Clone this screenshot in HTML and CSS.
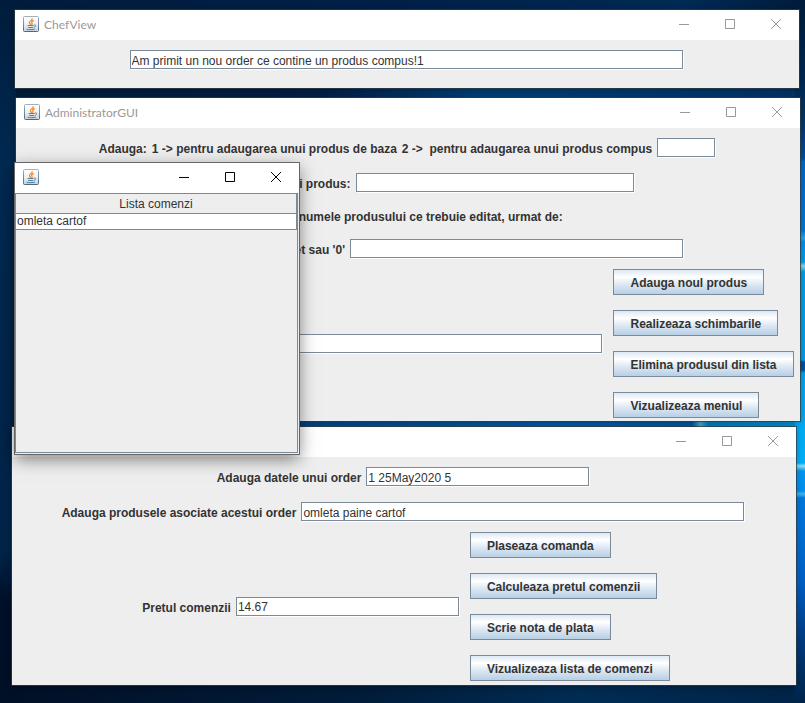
FILE: index.html
```html
<!DOCTYPE html>
<html lang="ro">
<head>
<meta charset="utf-8">
<meta name="viewport" content="width=device-width, initial-scale=1">
<title>Restaurant</title>
<link rel="stylesheet" href="styles.css">
</head>
<body>
<svg class="defs" aria-hidden="true">
  <defs>
    <linearGradient id="tile" x1="0" y1="0" x2="0" y2="1">
      <stop offset="0" stop-color="#ffffff"/>
      <stop offset="0.5" stop-color="#eef1f4"/>
      <stop offset="1" stop-color="#c4d0da"/>
    </linearGradient>
    <linearGradient id="edge" x1="0" y1="0" x2="0" y2="1">
      <stop offset="0" stop-color="#9fb0be"/>
      <stop offset="1" stop-color="#4b6a84"/>
    </linearGradient>
    <symbol id="java" viewBox="0 0 16 16">
      <rect x="0.5" y="0.5" width="15" height="15" rx="1" fill="url(#tile)" stroke="url(#edge)"/>
      <path d="M9.2 2.3C9.8 4.4 6 4.8 6.4 6.8C6.6 7.6 7.4 7.8 7.6 8.8M10.8 4.6C8.8 5.2 8 6 9 7.2C9.4 7.8 9 8.4 8.6 8.8" fill="none" stroke="#ee8322" stroke-width="1.2"/>
      <path d="M4.6 9.5H10.6M5.2 11.5H10.2M11.2 8.9C13.4 8.6 13 10.8 11 11.1M3.6 13.3C6 13.8 9.6 13.8 12 13" fill="none" stroke="#5a7f9a" stroke-width="1"/>
    </symbol>
    <symbol id="min" viewBox="0 0 12 12"><path d="M1 6.5H11" stroke="currentColor"/></symbol>
    <symbol id="max" viewBox="0 0 12 12"><path d="M1.5 1.5H10.5V10.5H1.5Z" fill="none" stroke="currentColor"/></symbol>
    <symbol id="close" viewBox="0 0 12 12"><path d="M1 1L11 11M11 1L1 11" stroke="currentColor" stroke-width="1"/></symbol>
  </defs>
</svg>

<main class="desktop">
  <section class="window chef">
    <header class="titlebar">
      <svg class="logo"><use href="#java"/></svg>
      <h1 class="title">ChefView</h1>
      <button class="ctl" aria-label="Minimize"><svg><use href="#min"/></svg></button>
      <button class="ctl" aria-label="Maximize"><svg><use href="#max"/></svg></button>
      <button class="ctl" aria-label="Close"><svg><use href="#close"/></svg></button>
    </header>
    <div class="content">
      <div class="row">
        <input class="field w-message" type="text" aria-label="Mesaj" value="Am primit un nou order ce contine un produs compus!1">
      </div>
    </div>
  </section>

  <section class="window admin">
    <header class="titlebar">
      <svg class="logo"><use href="#java"/></svg>
      <h1 class="title">AdministratorGUI</h1>
      <button class="ctl" aria-label="Minimize"><svg><use href="#min"/></svg></button>
      <button class="ctl" aria-label="Maximize"><svg><use href="#max"/></svg></button>
      <button class="ctl" aria-label="Close"><svg><use href="#close"/></svg></button>
    </header>
    <div class="content">
      <div class="row">
        <label for="kind">Adauga:</label>
        <label for="kind">1 -&gt; pentru adaugarea unui produs de baza</label>
        <label for="kind">2 -&gt;&nbsp; pentru adaugarea unui produs compus</label>
        <input class="field w-tiny" type="text" id="kind">
      </div>
      <div class="row">
        <label class="wide-label" for="product">Adauga datele unui produs:</label>
        <input class="field w-medium" type="text" id="product">
      </div>
      <div class="row text-row">
        <label for="edit">Adauga numele produsului ce trebuie editat, urmat de:</label>
      </div>
      <div class="row">
        <label class="wider-label" for="edit">noul nume sau '0' si noul pret sau '0'</label>
        <input class="field w-large" type="text" id="edit">
      </div>
      <div class="row actions-row">
        <label class="widest-label" for="remove">Adauga numele produsului de eliminat</label>
        <input class="field w-large" type="text" id="remove">
        <div class="actions">
          <button class="btn">Adauga noul produs</button>
          <button class="btn">Realizeaza schimbarile</button>
          <button class="btn">Elimina produsul din lista</button>
          <button class="btn">Vizualizeaza meniul</button>
        </div>
      </div>
    </div>
  </section>

  <section class="window order">
    <header class="titlebar">
      <svg class="logo"><use href="#java"/></svg>
      <h1 class="title">WaiterGUI</h1>
      <button class="ctl" aria-label="Minimize"><svg><use href="#min"/></svg></button>
      <button class="ctl" aria-label="Maximize"><svg><use href="#max"/></svg></button>
      <button class="ctl" aria-label="Close"><svg><use href="#close"/></svg></button>
    </header>
    <div class="content">
      <div class="row">
        <label for="date">Adauga datele unui order</label>
        <input class="field w-small" type="text" id="date" value="1 25May2020 5">
      </div>
      <div class="row">
        <label for="items">Adauga produsele asociate acestui order</label>
        <input class="field w-items" type="text" id="items" value="omleta paine cartof">
      </div>
      <div class="row actions-row order-actions">
        <label for="price">Pretul comenzii</label>
        <input class="field w-small" type="text" id="price" value="14.67">
        <div class="actions">
          <button class="btn">Plaseaza comanda</button>
          <button class="btn">Calculeaza pretul comenzii</button>
          <button class="btn">Scrie nota de plata</button>
          <button class="btn">Vizualizeaza lista de comenzi</button>
        </div>
      </div>
    </div>
  </section>

  <section class="window active list">
    <header class="titlebar">
      <svg class="logo"><use href="#java"/></svg>
      <span class="title"></span>
      <button class="ctl" aria-label="Minimize"><svg><use href="#min"/></svg></button>
      <button class="ctl" aria-label="Maximize"><svg><use href="#max"/></svg></button>
      <button class="ctl" aria-label="Close"><svg><use href="#close"/></svg></button>
    </header>
    <div class="scroll">
      <table class="orders">
        <thead><tr><th>Lista comenzi</th></tr></thead>
        <tbody><tr><td>omleta cartof</td></tr></tbody>
      </table>
    </div>
  </section>
</main>
</body>
</html>
```
FILE: styles.css
```css
* {
  box-sizing: border-box;
}

body {
  margin: 0;
  font: 12px/16px "Liberation Sans", Arial, sans-serif;
  color: #333;
}

.defs {
  position: absolute;
  width: 0;
  height: 0;
}

.desktop {
  position: relative;
  min-height: 100vh;
  overflow: hidden;
  background:
    linear-gradient(#001c3c 0, #002a55 90px, #003c78 130px, #0050a0 158px, #0068c8 162px, #0078d8 230px, #30a8e8 238px, #0090e8 242px, #00a0f0 262px, #90dcf0 266px, #00a0e8 272px, #00a0e8 360px, #0050a0 362px, #0050a0 370px, #00a8f0 373px, #00b0f8 463px, #90e0f8 466px, #0098f0 471px, #0090f0 491px, #40b8f0 494px, #0078e0 498px, #0060c8 580px, #003c80 640px, #002448 703px) right / 10px 100% no-repeat,
    linear-gradient(#001c3c 0, #002a52 170px, #00264c 400px, #002448 550px, #00102a 600px, #001026 703px) left / 16px 100% no-repeat,
    linear-gradient(90deg, #002a55, #004a90 35%, #0060b0 70%, #005ca8 86%, #50b0d0 87%, #0084c8 88%, #0098dc) 0 415px / 100% 16px no-repeat,
    linear-gradient(90deg, #001c3c, #002048 40%, #004078 60%, #003468) 0 86px / 100% 14px no-repeat,
    linear-gradient(90deg, #001c3c, #002048 50%, #002a55 85%, #001c3c) top / 100% 14px no-repeat,
    linear-gradient(90deg, #001026, #001c3a 45%, #002c54 72%, #002448);
}

.window {
  position: absolute;
  background: #eee;
  outline: 1px solid rgba(50, 60, 65, 0.75);
  box-shadow: 0 2px 8px rgba(0, 0, 0, 0.3);
}

.chef {
  left: 15px;
  top: 10px;
  right: 6px;
  padding-bottom: 14px;
}

.admin {
  left: 16px;
  top: 98px;
  right: 5px;
}

.order {
  left: 12px;
  top: 427px;
  right: 9px;
}

.list {
  display: flex;
  flex-direction: column;
  left: 15px;
  top: 163px;
  width: 284px;
  height: 291px;
}

.active {
  outline-color: #666;
  box-shadow: 0 5px 16px rgba(0, 0, 0, 0.5);
}

.titlebar {
  display: flex;
  align-items: center;
  height: 30px;
  padding: 0 0 2px 8px;
  background: #fff;
  color: #999;
}

.active .titlebar {
  color: #000;
}

.logo {
  width: 16px;
  height: 16px;
  margin-right: 5px;
}

.title {
  flex: 1;
  margin: 0;
  padding-top: 2px;
  font: 12px/16px Lato, "Open Sans", sans-serif;
}

.ctl {
  display: flex;
  align-items: center;
  justify-content: center;
  width: 46px;
  height: 28px;
  padding: 0;
  border: 0;
  background: none;
  color: inherit;
}

.ctl svg {
  width: 12px;
  height: 12px;
}

.content {
  display: flex;
  flex-direction: column;
  gap: 15px;
  padding: 10px 2px 4px 0;
}

.admin .content {
  padding-bottom: 3px;
}

.row {
  display: flex;
  align-items: center;
  justify-content: center;
  gap: 5px;
  height: 20px;
  white-space: nowrap;
}

.row label {
  padding-top: 2px;
  font-weight: bold;
}

.text-row {
  height: 16px;
}

.row .wide-label {
  width: 170px;
  text-align: right;
}

.row .wider-label {
  width: 214px;
  text-align: right;
}

.row .widest-label {
  width: 244px;
  text-align: right;
}

.actions-row {
  height: auto;
  margin-top: -5px;
}

.field {
  height: 19px;
  margin-bottom: 1px;
  padding: 2px 1px 0;
  border: 1px solid #7a8a99;
  border-radius: 0;
  background: #fff;
  box-shadow: 1px 1px 0 #fff;
  color: #333;
  font: inherit;
}

.w-tiny {
  width: 58px;
}

.w-small {
  width: 223px;
}

.w-medium {
  width: 278px;
}

.w-large {
  width: 333px;
}

.w-items {
  width: 443px;
}

.w-message {
  width: 553px;
}

.actions {
  display: flex;
  flex-direction: column;
  align-items: flex-start;
  gap: 15px;
  margin-left: 6px;
}

.order-actions {
  padding-left: 6px;
}

.btn {
  height: 26px;
  padding: 1px 16px 0;
  border: 1px solid #7a8a99;
  border-radius: 0;
  background: linear-gradient(#dde8f3, #fff 30%, #dde8f3 60%, #b8cfe5);
  color: #333;
  font: bold 12px/16px "Liberation Sans", Arial, sans-serif;
}

.scroll {
  flex: 1;
  border: 1px solid #7a8a99;
  box-shadow: inset -1px -1px 0 #eee;
  margin: 0 1px 1px 0;
}

.orders {
  width: 100%;
  border-collapse: collapse;
}

.orders th,
.orders td {
  height: 16px;
  padding: 0 1px;
  border-bottom: 1px solid #7a8a99;
  border-right: 1px solid #7a8a99;
  line-height: 15px;
  font-weight: normal;
}

.orders th {
  height: 19px;
  padding-top: 2px;
  text-align: center;
}

.orders td {
  background: #fff;
}
```
